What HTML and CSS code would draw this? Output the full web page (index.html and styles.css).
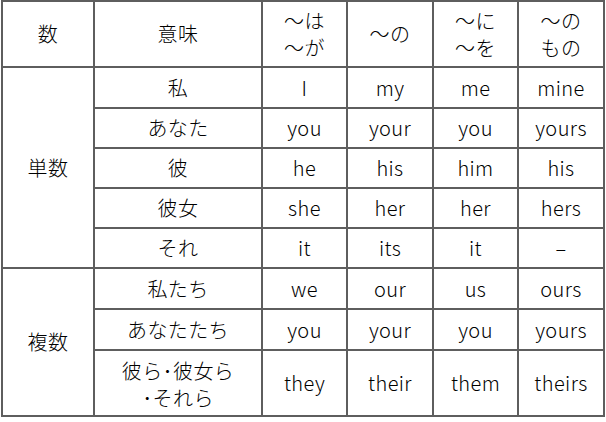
FILE: index.html
```html
<!DOCTYPE html>
<html lang="ja">
<head>
<meta charset="utf-8">
<link rel="stylesheet" href="styles.css">
</head>
<body>
<table class="pron">
  <colgroup>
    <col class="c1"><col class="c2"><col class="c3"><col class="c4"><col class="c5"><col class="c6">
  </colgroup>
  <tr class="head">
    <td>数</td><td>意味</td><td class="two">〜は<br>〜が</td><td>〜の</td><td class="two">〜に<br>〜を</td><td class="two">〜の<br>もの</td>
  </tr>
  <tr class="r41">
    <td rowspan="5">単数</td><td>私</td><td>I</td><td>my</td><td>me</td><td>mine</td>
  </tr>
  <tr class="r40"><td>あなた</td><td>you</td><td>your</td><td>you</td><td>yours</td></tr>
  <tr class="r40"><td>彼</td><td>he</td><td>his</td><td>him</td><td>his</td></tr>
  <tr class="r40"><td>彼女</td><td>she</td><td>her</td><td>her</td><td>hers</td></tr>
  <tr class="r40"><td>それ</td><td>it</td><td>its</td><td>it</td><td>–</td></tr>
  <tr class="r41">
    <td rowspan="3">複数</td><td>私たち</td><td>we</td><td>our</td><td>us</td><td>ours</td>
  </tr>
  <tr class="r41"><td>あなたたち</td><td>you</td><td>your</td><td>you</td><td>yours</td></tr>
  <tr class="head"><td class="two last">彼ら･彼女ら<br>･それら</td><td>they</td><td>their</td><td>them</td><td>theirs</td></tr>
</table>
</body>
</html>
```

FILE: styles.css
```css
html, body {
  margin: 0;
  padding: 0;
  background: #ffffff;
}
body {
  padding: 0 0 0 1px;
  font-family: "Noto Sans CJK JP", "Noto Sans", sans-serif;
  color: #000000;
}
.pron {
  border-collapse: collapse;
  table-layout: fixed;
  width: 604px;
  font-size: 20px;
  font-weight: 300;
  line-height: 26px;
  letter-spacing: 0.4px;
}
.pron td {
  border: 2px solid #5e5e5e;
  text-align: center;
  vertical-align: middle;
  padding: 0;
}
.pron td.two {
  line-height: 27px;
}
.pron td.last {
  padding-top: 2px;
}
.c1 { width: 92px; }
.c2 { width: 168px; }
.c3 { width: 85px; }
.c4 { width: 86px; }
.c5 { width: 85px; }
.c6 { width: 86px; }
.head { height: 66px; }
.r41 { height: 41px; }
.r40 { height: 40px; }
```
